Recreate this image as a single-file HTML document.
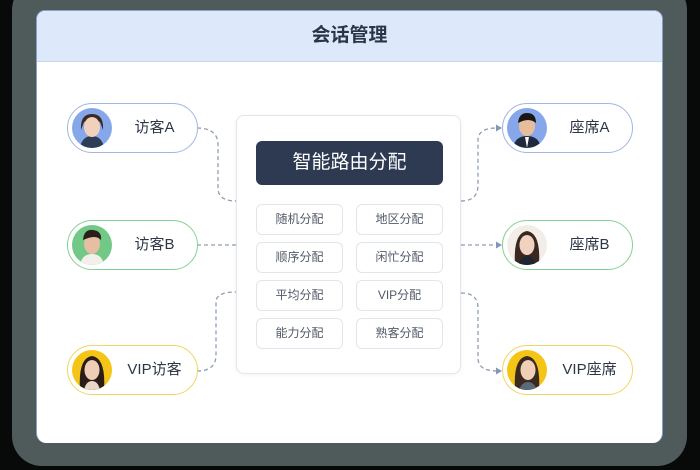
<!DOCTYPE html>
<html><head><meta charset="utf-8"><style>
*{margin:0;padding:0;box-sizing:border-box}
body{width:700px;height:470px;background:#080a0a;position:relative;overflow:hidden;font-family:"Liberation Sans","Noto Sans CJK SC",sans-serif}
.frame{position:absolute;left:12px;top:-20px;width:675px;height:486px;background:#4f5a5a;border-radius:30px}
.card{position:absolute;left:36px;top:10px;width:627px;height:433px;background:#fff;border-radius:9px 9px 10px 10px;overflow:hidden;border:1px solid #8aa0c8;border-bottom:none}
.hdr{height:51px;background:#dde8fb;border-bottom:1px solid #c9d7ef;text-align:center;line-height:50px;font-size:19px;color:#2b3548;font-weight:bold}
.pill{position:absolute;width:131px;height:50px;border-radius:25px;border:1.5px solid;background:#fff}
.pill .av{position:absolute;left:4px;top:4px;width:40px;height:40px;border-radius:50%;overflow:hidden}
.pill span{position:absolute;left:44px;right:0;top:0;line-height:47px;text-align:center;font-size:15px;color:#2e3646}
.blue{border-color:#a3b5e4}.blue .av{background:#86a7ea}
.green{border-color:#84d293}.green .av{background:#72c886}
.yel{border-color:#f0d563}.yel .av{background:#f4c417}
.center{position:absolute;left:236px;top:115px;width:225px;height:259px;border:1px solid #e3e6ec;border-radius:8px;background:#fff;box-shadow:0 1px 4px rgba(0,0,0,.05)}
.dark{position:absolute;left:256px;top:141px;width:187px;height:44px;background:#2e3a52;border-radius:6px;color:#fff;font-size:19px;text-align:center;line-height:44px}
.b{position:absolute;width:87px;height:31px;border:1px solid #e2e5ea;border-radius:6px;text-align:center;line-height:29px;font-size:12px;color:#525a68;background:#fff}
</style></head><body>
<div class="frame"></div>
<div class="card"><div class="hdr">会话管理</div></div>
<svg style="position:absolute;left:0;top:0" width="700" height="470">
<g fill="none" stroke="#8f9db3" stroke-width="1.3" stroke-dasharray="4 3">
<path d="M197 128 Q218 128 218 145 L218 188 Q218 201 236 201"/>
<path d="M197 245 L236 245"/>
<path d="M197 371 Q216 371 216 355 L216 302 Q216 292 236 292"/>
<path d="M461 201 Q478 201 478 185 L478 140 Q478 128 497 128"/>
<path d="M461 245 L497 245"/>
<path d="M461 293 Q478 293 478 308 L478 358 Q478 371 497 371"/>
</g>
<g fill="#8297b8"><path d="M502 128 l-6 -3.5 v7z"/><path d="M502 245 l-6 -3.5 v7z"/><path d="M502 371 l-6 -3.5 v7z"/></g>
</svg>
<div class="center"></div>
<div class="dark">智能路由分配</div>
<div class="b" style="left:256px;top:204px">随机分配</div><div class="b" style="left:356px;top:204px">地区分配</div>
<div class="b" style="left:256px;top:242px">顺序分配</div><div class="b" style="left:356px;top:242px">闲忙分配</div>
<div class="b" style="left:256px;top:280px">平均分配</div><div class="b" style="left:356px;top:280px">VIP分配</div>
<div class="b" style="left:256px;top:318px">能力分配</div><div class="b" style="left:356px;top:318px">熟客分配</div>

<div class="pill blue" style="left:67px;top:103px"><div class="av"><svg width="40" height="40"><path d="M8 40 Q10 28 20 28 Q30 28 32 40Z" fill="#2c3d55"/><path d="M9 22 Q8 6 20 6 Q32 6 31 22 L28 14 Q20 10 12 14Z" fill="#3a2a22"/><ellipse cx="20" cy="19" rx="8" ry="10" fill="#f1d0bc"/></svg></div><span>访客A</span></div>
<div class="pill green" style="left:67px;top:220px"><div class="av"><svg width="40" height="40"><path d="M8 40 Q10 29 20 29 Q30 29 32 40Z" fill="#f3efe9"/><ellipse cx="20" cy="19" rx="8" ry="10" fill="#e6bea3"/><path d="M11 15 Q12 4 21 5 Q30 6 29 15 Q24 9 11 15Z" fill="#2a1e1a"/></svg></div><span>访客B</span></div>
<div class="pill yel" style="left:67px;top:345px"><div class="av"><svg width="40" height="40"><path d="M8 40 Q6 8 20 6 Q34 8 32 40Z" fill="#2a1c17"/><ellipse cx="20" cy="20" rx="7.5" ry="10" fill="#f0cdb6"/><path d="M12 40 Q14 31 20 31 Q26 31 28 40Z" fill="#e9d6c8"/></svg></div><span>VIP访客</span></div>

<div class="pill blue" style="left:502px;top:103px"><div class="av"><svg width="40" height="40"><path d="M6 40 Q8 28 20 28 Q32 28 34 40Z" fill="#1f2a3c"/><path d="M18 29 L20 40 L22 29Z" fill="#fff"/><ellipse cx="20" cy="18" rx="8" ry="10" fill="#e7bd9c"/><path d="M11 15 Q12 5 20 5 Q29 5 29 15 Q22 9 11 15Z" fill="#1b1715"/></svg></div><span>座席A</span></div>
<div class="pill green" style="left:502px;top:220px"><div class="av" style="background:#f3ede8"><svg width="40" height="40"><path d="M8 40 Q6 8 20 6 Q34 8 32 40Z" fill="#3a2820"/><ellipse cx="20" cy="20" rx="7.5" ry="10" fill="#f1d2c0"/><path d="M11 40 Q14 31 20 31 Q26 31 29 40Z" fill="#1f2530"/></svg></div><span>座席B</span></div>
<div class="pill yel" style="left:502px;top:345px"><div class="av"><svg width="40" height="40"><path d="M8 40 Q6 8 20 6 Q34 8 32 40Z" fill="#3b2a1e"/><ellipse cx="21" cy="20" rx="7.5" ry="10" fill="#f0cfb8"/><path d="M12 40 Q15 32 21 32 Q27 32 30 40Z" fill="#5a6a7a"/></svg></div><span>VIP座席</span></div>
</body></html>
